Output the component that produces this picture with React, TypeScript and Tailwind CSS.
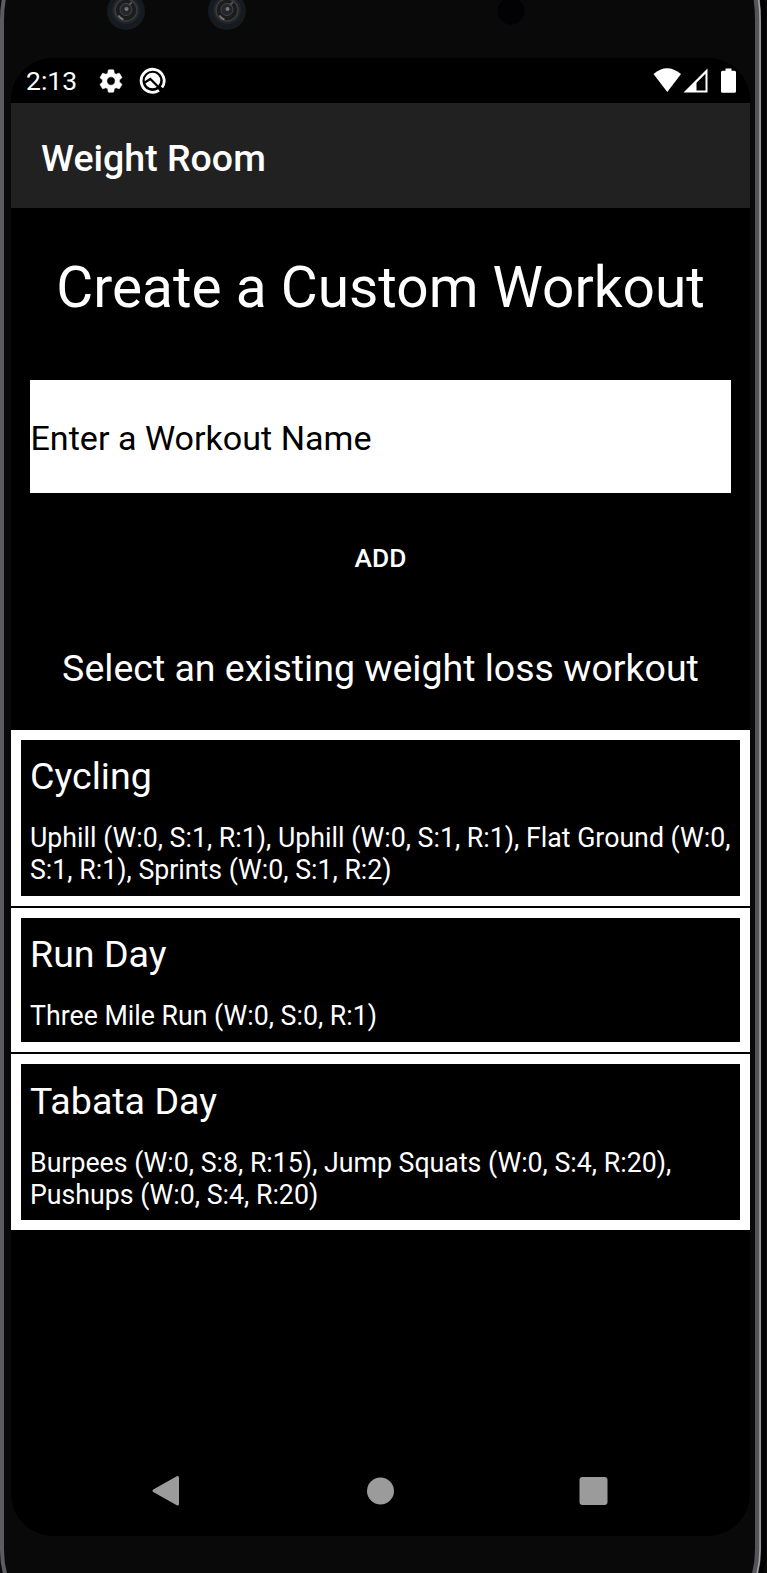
import type { ReactNode } from "react";

const workouts = [
  { name: "Cycling", lines: ["Uphill (W:0, S:1, R:1), Uphill (W:0, S:1, R:1), Flat Ground (W:0,", "S:1, R:1), Sprints (W:0, S:1, R:2)"] },
  { name: "Run Day", lines: ["Three Mile Run (W:0, S:0, R:1)"] },
  { name: "Tabata Day", lines: ["Burpees (W:0, S:8, R:15), Jump Squats (W:0, S:4, R:20),", "Pushups (W:0, S:4, R:20)"] },
];

function Lens() {
  return (
    <svg width="40" height="32" viewBox="0 0 40 32">
      <circle cx="20" cy="11" r="19" fill="#151b20" />
      <circle cx="20" cy="10" r="14" fill="#222426" />
      <circle cx="20" cy="10" r="11" fill="#1b1c1e" stroke="#3a3b3d" strokeWidth="1.5" />
      <circle cx="20" cy="9.5" r="6" fill="#25262b" stroke="#45464a" strokeWidth="1" />
      <circle cx="20.5" cy="9" r="2" fill="#74767f" />
      <path d="M12.5 15.5a9.5 9.5 0 0 0 5 4" fill="none" stroke="#77787c" strokeWidth="1.5" />
      <path d="M23 5l3-3" fill="none" stroke="#505155" strokeWidth="2" />
    </svg>
  );
}

function StatusBar() {
  return (
    <div className="flex h-[45px] items-start bg-black">
      <span className="ml-[15px] mt-[7px] text-[26.5px] leading-[32px]">2:13</span>
      <svg className="ml-[20px] mt-[9px]" width="28" height="28" viewBox="0 0 24 24" fill="white">
        <path d="M19.14 12.94c.04-.3.06-.61.06-.94 0-.32-.02-.64-.07-.94l2.03-1.58c.18-.14.23-.41.12-.61l-1.92-3.32c-.12-.22-.37-.29-.59-.22l-2.39.96c-.5-.38-1.03-.7-1.62-.94l-.36-2.54c-.04-.24-.24-.41-.48-.41h-3.84c-.24 0-.43.17-.47.41l-.36 2.54c-.59.24-1.13.57-1.62.94l-2.39-.96c-.22-.08-.47 0-.59.22L2.74 8.87c-.12.21-.08.47.12.61l2.03 1.58c-.05.3-.09.63-.09.94s.02.64.07.94l-2.03 1.58c-.18.14-.23.41-.12.61l1.92 3.32c.12.22.37.29.59.22l2.39-.96c.5.38 1.03.7 1.62.94l.36 2.54c.05.24.24.41.48.41h3.84c.24 0 .44-.17.47-.41l.36-2.54c.59-.24 1.13-.56 1.62-.94l2.39.96c.22.08.47 0 .59-.22l1.92-3.32c.12-.22.07-.47-.12-.61l-2.01-1.58zM12 15.6a3.6 3.6 0 1 1 0-7.2 3.6 3.6 0 0 1 0 7.2z" stroke="white" strokeWidth="0.5" />
      </svg>
      <svg className="ml-[14px] mt-[9px]" width="28" height="28" viewBox="0 0 28 28" fill="none">
        <path d="M20 23.4A11.5 11.5 0 1 1 23 20.5" stroke="white" strokeWidth="2.8" />
        <circle cx="13.5" cy="13.5" r="7.8" fill="white" />
        <path d="M5 16L11.300 12L22.500 23" stroke="black" strokeWidth="2.200" />
      </svg>
      <svg className="ml-auto mr-[14.5px] mt-[9px]" width="84" height="28" viewBox="0 0 84 28" fill="white">
        <path d="M1.5 7Q15-4.500 29 7L15.300 25Z" />
        <path d="M31.5 25.500L55.500 1.500V25.500ZM44.500 15.700V23.500H53.500V6.700Z" fillRule="evenodd" />
        <path d="M73.5 1.500h6v2.300h3q1.500 0 1.500 1.500v19q0 1.500-1.500 1.500h-12q-1.500 0-1.500-1.500v-19q0-1.500 1.500-1.500h3z" />
      </svg>
    </div>
  );
}

function WorkoutCard({ name, children }: { name: string; children: ReactNode }) {
  return (
    <li className="border-[10px] border-white bg-black px-[9px] pb-[10px] pt-[13px] last:pb-[9px] last:pt-[14px]">
      <h3 className="text-[37.6px] leading-[47px]">{name}</h3>
      <p className="mt-[22px] whitespace-nowrap text-[26.72px] leading-[32px]">{children}</p>
    </li>
  );
}

export default function App() {
  return (
    <div className="relative h-[1573px] w-[767px] overflow-hidden bg-[#090909] font-['Roboto',sans-serif] text-white">
      <svg className="absolute inset-0" width="767" height="1573" viewBox="0 0 767 1573" fill="none">
        <path d="M6-10Q2 4 2 20V1550Q2 1566 7 1580" stroke="#5b5b60" strokeWidth="4" />
        <path d="M755-10Q758 4 758 20V1550Q758 1566 753 1580" stroke="#555559" strokeWidth="6" />
        <path d="M757-10Q760 4 760 20V1550Q760 1566 755 1580" stroke="#a3a3a5" strokeWidth="1.5" />
        <path d="M761-10Q764 4 764 20V1550Q764 1566 759 1580" stroke="#020203" strokeWidth="4" />
      </svg>
      <div className="relative flex h-[58px] items-start">
        <div className="ml-[106px]"><Lens /></div>
        <div className="ml-[61px]"><Lens /></div>
        <svg className="ml-[250px]" width="28" height="26" viewBox="0 0 28 26">
          <circle cx="14" cy="11" r="13.5" fill="#020204" />
        </svg>
      </div>
      <main className="relative ml-[11px] flex h-[1478px] w-[739px] flex-col overflow-hidden rounded-[42px] bg-black">
        <StatusBar />
        <header className="flex h-[105px] items-center bg-[#212121] pl-[30px] pt-[5px] text-[37.5px] font-medium">Weight Room</header>
        <h1 className="mt-[47px] text-center text-[56.8px] leading-[66px]">Create a Custom Workout</h1>
        <div className="mx-[19px] mt-[59px] flex h-[113px] items-center bg-white pl-[0.5px] pt-[4px] text-[34.1px] text-black">Enter a Workout Name</div>
        <button className="mt-[42px] h-[48px] text-[26.3px] font-medium">ADD</button>
        <h2 className="mt-[61px] text-center text-[37.5px] leading-[48px]">Select an existing weight loss workout</h2>
        <ul className="mt-[38px] flex flex-col gap-[2px]">
          {workouts.map((w) => (
            <WorkoutCard key={w.name} name={w.name}>
              {w.lines.map((l) => <span className="block" key={l}>{l}</span>)}
            </WorkoutCard>
          ))}
        </ul>
        <nav className="mt-auto flex h-[90px] items-center justify-center">
          <svg width="460" height="34" viewBox="0 0 460 34" fill="#9b9b9b">
            <path d="M26.5 3.500V30L3 16.800Z" stroke="#9b9b9b" strokeWidth="3" strokeLinejoin="round" />
            <circle cx="229.5" cy="17" r="13.5" />
            <rect x="428.5" y="3" width="28" height="28" rx="3" />
          </svg>
        </nav>
      </main>
    </div>
  );
}
